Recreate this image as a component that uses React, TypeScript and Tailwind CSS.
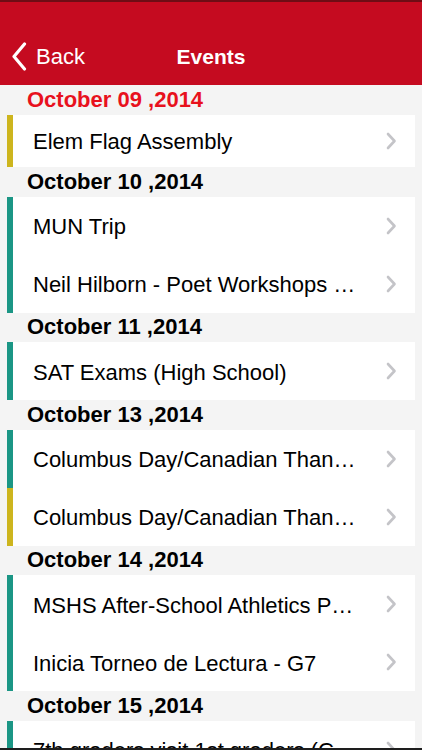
import React from "react";

type Ev = { title: string; color: string };
type Section = { date: string; red?: boolean; events: Ev[] };

const Y = "#cdb51e";
const T = "#1b9685";

const sections: Section[] = [
  { date: "October 09 ,2014", red: true, events: [{ title: "Elem Flag Assembly", color: Y }] },
  {
    date: "October 10 ,2014",
    events: [
      { title: "MUN Trip", color: T },
      { title: "Neil Hilborn - Poet Workshops …", color: T },
    ],
  },
  { date: "October 11 ,2014", events: [{ title: "SAT Exams (High School)", color: T }] },
  {
    date: "October 13 ,2014",
    events: [
      { title: "Columbus Day/Canadian Than…", color: T },
      { title: "Columbus Day/Canadian Than…", color: Y },
    ],
  },
  {
    date: "October 14 ,2014",
    events: [
      { title: "MSHS After-School Athletics P…", color: T },
      { title: "Inicia Torneo de Lectura - G7", color: T },
    ],
  },
  { date: "October 15 ,2014", events: [{ title: "7th graders visit 1st graders (C…", color: T }] },
];

function Chevron() {
  return (
    <svg width="11" height="18" viewBox="0 0 11 18" className="shrink-0">
      <path d="M2 2 L8.5 9 L2 16" fill="none" stroke="#c4c4c8" strokeWidth="2.6" strokeLinecap="round" strokeLinejoin="round" />
    </svg>
  );
}

export default function App() {
  return (
    <div
      className="w-[422px] h-[750px] overflow-hidden flex flex-col bg-[#f4f4f4]"
      style={{ fontFamily: '"Liberation Sans", Arial, sans-serif' }}
    >
      <div className="h-[2px] bg-[#6e0d15] shrink-0" />
      <div className="bg-[#c50b20] shrink-0 pt-[25px]">
        <div className="h-[58px] relative flex items-center justify-center">
          <div className="absolute left-[11px] top-0 h-full flex items-center gap-[9px]">
            <svg width="16" height="29" viewBox="0 0 16 29">
              <path d="M13.5 2 L3 14.5 L13.5 27" fill="none" stroke="#ffffff" strokeWidth="3.2" strokeLinecap="round" strokeLinejoin="round" />
            </svg>
            <span className="text-white text-[22px] leading-[26px] pt-[2px]">Back</span>
          </div>
          <span className="text-white text-[21px] font-bold leading-[26px] pt-[2px]">Events</span>
        </div>
      </div>
      <div className="flex-1 overflow-hidden">
        {sections.map((s, si) => (
          <div key={si}>
            <div className="h-[29.5px] flex items-center pl-[27px]">
              <span className={`text-[22px] font-bold leading-[26px] ${s.red ? "text-[#e8111d]" : "text-black"}`}>
                {s.date}
              </span>
            </div>
            <div className="ml-[7px] mr-[7px] bg-white">
              {s.events.map((e, ei) => (
                <div key={ei} className={`flex ${si === 0 ? "h-[52.5px]" : "h-[58px]"}`}>
                  <div className="w-[6px] shrink-0" style={{ backgroundColor: e.color }} />
                  <div className="flex-1 min-w-0 flex items-center pl-[20px] pr-[18px]">
                    <span className="flex-1 text-[22px] leading-[26px] pt-[3px] text-black whitespace-nowrap">
                      {e.title}
                    </span>
                    <Chevron />
                  </div>
                </div>
              ))}
            </div>
          </div>
        ))}
      </div>
      <div className="h-[2px] bg-[#1e1e1e] shrink-0" />
    </div>
  );
}
